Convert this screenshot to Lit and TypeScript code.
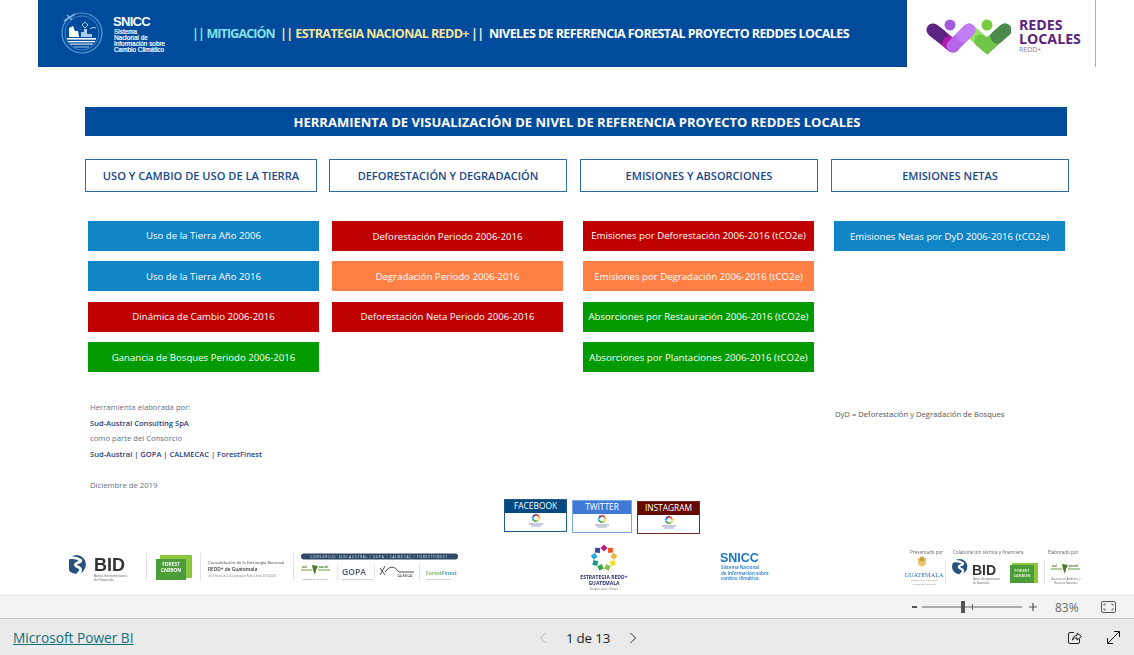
import { LitElement, html, css, svg } from "lit";
import { customElement } from "lit/decorators.js";

const petals = ["#b0207a", "#ef5a24", "#f5b335", "#f5dd2a", "#8cc63f", "#3fa548", "#1a9a8a", "#29a9e0", "#3a4a9f"];
function flower(cx: number, cy: number, r: number, s: number) {
  return petals.map((c, i) => {
    const a = (i * 40 * Math.PI) / 180;
    const x = cx + r * Math.sin(a);
    const y = cy - r * Math.cos(a);
    return svg`<rect x=${x - s / 2} y=${y - s / 2} width=${s} height=${s} fill=${c} transform="rotate(${i * 40 + 45} ${x} ${y})"></rect>`;
  });
}

const miniLogo = html`<svg class="mini" viewBox="0 0 30 17" width="30" height="17">
  ${flower(15, 5, 3.2, 2)}
  <rect x="8" y="10.5" width="14" height="1" fill="#8a92b8"></rect>
  <rect x="10" y="12.5" width="10" height="1" fill="#9aa2c4"></rect>
</svg>`;

const bidGlobe = (x: number, y: number, s: number) => svg`
  <g transform="translate(${x} ${y}) scale(${s})">
    <circle cx="9" cy="9" r="9" fill="#27527e"></circle>
    <path d="M1 3 C5 2 10 3 13 5 C14 7 9 7 8 9 C8 12 13 11 13 14 C13 16 11 17 10 18.5" fill="none" stroke="#fff" stroke-width="2.6"></path>
  </g>`;

const sudAustral = (x: number, y: number) => svg`
  <g transform="translate(${x} ${y})">
    <rect x="0" y="4.5" width="11" height="1" fill="#6b9a3a"></rect>
    <path d="M11 0 L17 1 L15 5 L14 10 L12 5 Z" fill="#4a7a28"></path>
    <rect x="17" y="4.5" width="12" height="1" fill="#6b9a3a"></rect>
    <text x="1" y="2.6" font-size="2.6" fill="#4a7a28" font-weight="700">sud</text>
    <text x="18" y="2.6" font-size="2.6" fill="#4a7a28" font-weight="700">austral</text>
  </g>`;

@customElement("app-root")
export class AppRoot extends LitElement {
  static styles = css`
    :host { display: block; width: 1134px; height: 655px; overflow: hidden; background: #fff; font-family: "Open Sans", "Noto Sans", sans-serif; }
    .report { height: 595px; display: flex; flex-direction: column; }
    .top { display: flex; height: 67px; margin-left: 38px; flex: none; }
    .banner { width: 869px; background: #004b9b; display: flex; align-items: flex-start; }
    .emblem { margin: 10px 0 0 22px; flex: none; }
    .snicc { margin: 15px 0 0 7px; width: 79px; color: #fff; flex: none; font-weight: 700; }
    .snicc b { display: block; font-family: "Liberation Sans", sans-serif; font-size: 13px; line-height: 14px; letter-spacing: -.7px; }
    .snicc span { display: block; font-family: "Liberation Sans", sans-serif; font-size: 6.4px; line-height: 6.1px; margin-left: 1px; font-weight: 400; -webkit-text-stroke: .2px #fff; }
    .crumbs { margin: 25px 0 0 0; font-size: 12.5px; line-height: 17px; font-weight: 700; white-space: nowrap; display: flex; }
    .cy { color: #85e2e6; width: 88px; letter-spacing: -.87px; }
    .ye { color: #f8e49a; width: 191px; letter-spacing: -.58px; }
    .wh { color: #fff; letter-spacing: -.58px; }
    .wh i { font-style: normal; color: #f3f0d8; }
    .brand { width: 188px; border-right: 1px solid #8fb3d9; display: flex; align-items: flex-start; }
    .wlogo { margin: 13px 0 0 18px; flex: none; }
    .brandtx { margin: 18px 0 0 8px; color: #5b2480; font-weight: 700; font-size: 14.2px; line-height: 14px; }
    .brandtx small { display: block; font-size: 7px; line-height: 8px; color: #8a7a96; font-weight: 400; }
    .title { margin: 40px 67px 0 85px; height: 29px; flex: none; background: #004b9b; color: #fff; font-weight: 700; font-size: 13px; display: flex; align-items: center; justify-content: center; padding-left: 2px; box-sizing: border-box; }
    .heads { margin: 23px 0 0 85px; display: grid; grid-template-columns: 244px 251px 251px 238px; flex: none; }
    .heads div { width: 238px; height: 33px; box-sizing: border-box; border: 1px solid #2e6ca8; color: #174a8c; font-weight: 600; font-size: 11px; display: flex; align-items: center; justify-content: center; white-space: nowrap; }
    .heads div:first-child { width: 232px; font-size: 11.1px; }
    .cols { margin: 29px 0 0 88px; height: 151px; display: flex; flex: none; }
    .col { width: 231px; flex: none; display: flex; flex-direction: column; gap: 10.4px; }
    .col:nth-child(2) { margin-left: 13px; }
    .col:nth-child(3), .col:nth-child(4) { margin-left: 20px; }
    .btn { height: 30px; color: #fff; font-size: 9.65px; display: flex; align-items: center; justify-content: center; white-space: nowrap; }
    .blue { background: #0f84c6; }
    .red { background: #c00000; }
    .orange { background: #ff7f44; }
    .green { background: #009b00; }
    .info { margin: 28px 0 0 90px; display: flex; flex: none; }
    .credits { width: 745px; font-size: 7.7px; line-height: 15.6px; color: #667085; height: 94px; }
    .credits b { display: block; font-weight: 600; font-size: 7.55px; color: #1f3f7a; }
    .credits p { margin: 0; }
    .credits .gap { margin-top: 15.6px; }
    .note { font-size: 7.65px; color: #555; padding-top: 7px; line-height: 15px; }
    .social { margin: 5px 0 0 504px; display: flex; gap: 5px; flex: none; height: 35px; align-items: flex-start; }
    .soc { width: 63px; height: 33px; box-sizing: border-box; border: 1.5px solid; display: flex; flex-direction: column; background: #fff; overflow: hidden; }
    .soc span { display: block; height: 13px; color: #fff; font-size: 8.4px; line-height: 11px; text-align: center; flex: none; }
    .mini { display: block; margin: 0 auto; }
    .fb { border-color: #1e5a8c; } .fb span { background: #004a80; }
    .tw { border-color: #7aa5e8; width: 60px; margin-top: 1px; } .tw span { background: #3f7ad6; }
    .ig { border-color: #7a2a25; margin-top: 2px; } .ig span { background: #640a00; }
    .logos { margin: 10px 0 0 69px; display: grid; grid-template-columns: 509px 142px 185px 1fr; flex: none; height: 51px; }
    .logos svg { display: block; filter: blur(.3px); }
    .zoombar { height: 22px; border-top: 1px solid #e2e2e2; background: #f3f3f3; display: flex; align-items: center; color: #666; }
    .zoombar svg { display: block; flex: none; }
    .slider { margin-left: 912px; }
    .pct { font-size: 12px; margin-left: 15px; width: 46px; color: #6a6a6a; }
    .foot { height: 36px; border-top: 1px solid #c8c8c8; background: #eaeaea; display: grid; grid-template-columns: 539px 98px 1fr; align-items: center; }
    .pbi { margin-left: 13px; color: #0f6f78; font-size: 13.7px; text-decoration: underline; white-space: nowrap; }
    .pager { display: flex; align-items: center; justify-content: space-between; color: #222; font-size: 13.4px; letter-spacing: -.2px; padding-top: 1px; }
    .acts { display: flex; justify-content: flex-end; gap: 25px; padding-right: 14px; }
  `;

  render() {
    const cols: [string, string][][] = [
      [["Uso de la Tierra Año 2006", "blue"], ["Uso de la Tierra Año 2016", "blue"], ["Dinámica de Cambio 2006-2016", "red"], ["Ganancia de Bosques Periodo 2006-2016", "green"]],
      [["Deforestación Periodo 2006-2016", "red"], ["Degradación Periodo 2006-2016", "orange"], ["Deforestación Neta Periodo 2006-2016", "red"]],
      [["Emisiones por Deforestación 2006-2016 (tCO2e)", "red"], ["Emisiones por Degradación 2006-2016 (tCO2e)", "orange"], ["Absorciones por Restauración 2006-2016 (tCO2e)", "green"], ["Absorciones por Plantaciones 2006-2016 (tCO2e)", "green"]],
      [["Emisiones Netas por DyD 2006-2016 (tCO2e)", "blue"]],
    ];
    return html`
      <div class="report">
        <div class="top">
          <div class="banner">
            <svg class="emblem" width="46" height="46" viewBox="0 0 46 46">
              <circle cx="22" cy="23" r="20" fill="none" stroke="#5c9bd8" stroke-width="1.2"></circle>
              <circle cx="22" cy="23" r="17" fill="none" stroke="#3f82c8" stroke-width="1"></circle>
              <g stroke="#7fb0e0" stroke-width="1.6" fill="none"><path d="M4 11 L15 4"></path><path d="M7 5 L12 10"></path></g>
              <path d="M9 27 L9 18 L13 16 L15 21 L18 21 L19 27 Z" fill="#fff"></path>
              <path d="M21 27 V22 H24 V19 H27 V24 H32 V27 Z" fill="#a9cdf0"></path>
              <path d="M25 12 l3 3 l-3 3 l-3 -3 Z" fill="none" stroke="#a9cdf0"></path>
              <path d="M30 19 q3 -3 6 -1" fill="none" stroke="#a9cdf0"></path>
              <rect x="7" y="28" width="29" height="1.6" fill="#fff"></rect>
              <rect x="8" y="31" width="27" height="1.3" fill="#fff"></rect>
              <rect x="10" y="33.5" width="23" height="1.2" fill="#d5e6f7"></rect>
              <rect x="14" y="36.5" width="15" height="1" fill="#9cc2ea"></rect>
            </svg>
            <div class="snicc"><b>SNICC</b><span>Sistema</span><span>Nacional de</span><span>Información sobre</span><span>Cambio Climático</span></div>
            <div class="crumbs">
              <span class="cy">|| MITIGACIÓN</span>
              <span class="ye">|| ESTRATEGIA NACIONAL REDD+</span>
              <span class="wh"><i>||</i>&nbsp; NIVELES DE REFERENCIA FORESTAL PROYECTO REDDES LOCALES</span>
            </div>
          </div>
          <div class="brand">
            <svg class="wlogo" width="86" height="42" viewBox="0 0 86 42" fill="none" stroke-width="13">
              <circle cx="25" cy="12" r="5.5" fill="#a45be0"></circle>
              <circle cx="62" cy="12" r="5.5" fill="#7ac943"></circle>
              <path d="M8 17 L28 33" stroke="#8f108f"></path>
              <path d="M8 17 L16 23" stroke="#5b2480" stroke-linecap="round"></path>
              <path d="M24 30 L28 33" stroke="#b01cb0" stroke-linecap="round"></path>
              <path d="M28 33 L44 17" stroke="#b566ea" stroke-linecap="round"></path>
              <path d="M44 17 L62 33" stroke="#95e063"></path>
              <path d="M38 23 L44 17" stroke="#c27cf5" stroke-linecap="round"></path>
              <path d="M62 33 L80 17" stroke="#5a9e5a" stroke-linecap="round"></path>
              <path d="M56 28 L62 33 L66 29" stroke="#6fc545" stroke-linecap="round"></path>
              <path d="M72 24 L80 17" stroke="#4a8a4a" stroke-linecap="round"></path>
            </svg>
            <div class="brandtx">REDES<br />LOCALES<small>REDD+</small></div>
          </div>
        </div>

        <div class="title">HERRAMIENTA DE VISUALIZACIÓN DE NIVEL DE REFERENCIA PROYECTO REDDES LOCALES</div>

        <div class="heads">
          <div>USO Y CAMBIO DE USO DE LA TIERRA</div>
          <div>DEFORESTACIÓN Y DEGRADACIÓN</div>
          <div>EMISIONES Y ABSORCIONES</div>
          <div>EMISIONES NETAS</div>
        </div>

        <div class="cols">
          ${cols.map((c) => html`<div class="col">${c.map(([t, k]) => html`<div class="btn ${k}">${t}</div>`)}</div>`)}
        </div>

        <div class="info">
          <div class="credits">
            <p>Herramienta elaborada por:</p>
            <b>Sud-Austral Consulting SpA</b>
            <p>como parte del Consorcio</p>
            <b>Sud-Austral | GOPA | CALMECAC | ForestFinest</b>
            <p class="gap">Diciembre de 2019</p>
          </div>
          <div class="note">DyD = Deforestación y Degradación de Bosques</div>
        </div>

        <div class="social">
          <div class="soc fb"><span>FACEBOOK</span>${miniLogo}</div>
          <div class="soc tw"><span>TWITTER</span>${miniLogo}</div>
          <div class="soc ig"><span>INSTAGRAM</span>${miniLogo}</div>
        </div>

        <div class="logos">
          <svg width="389" height="51" viewBox="0 0 389 51" font-family="Open Sans, sans-serif">
            ${bidGlobe(-2, 11, 1.05)}
            <text x="25" y="27" font-size="18" font-weight="700" fill="#333" font-family="Liberation Sans, sans-serif">BID</text>
            <text x="25" y="32.5" font-size="3.2" fill="#555">Banco Interamericano</text>
            <text x="25" y="37" font-size="3.2" fill="#555">de Desarrollo</text>
            <rect x="77" y="9" width="1" height="28" fill="#e4e4e4"></rect>
            <rect x="91" y="11" width="32" height="23" fill="#8cc63f"></rect>
            <rect x="87" y="15" width="30" height="21" fill="#4d9c3a"></rect>
            <text x="102" y="22" font-size="4.8" font-weight="700" fill="#fff" text-anchor="middle">FOREST</text>
            <text x="102" y="28" font-size="4.8" font-weight="700" fill="#fff" text-anchor="middle">CARBON</text>
            <rect x="131" y="9" width="1" height="28" fill="#e4e4e4"></rect>
            <text x="139" y="20" font-size="4.2" fill="#444">Consolidación de la Estrategia Nacional</text>
            <text x="139" y="27" font-size="4.8" font-weight="600" fill="#333">REDD+ de Guatemala</text>
            <text x="139" y="33" font-size="2.7" fill="#777">en el marco de la Cooperación Reino Unido 2019-2020</text>
            <rect x="224" y="9" width="1" height="28" fill="#e4e4e4"></rect>
            <rect x="232" y="9.5" width="157" height="6" rx="3" fill="#2e4a68"></rect>
            <text x="310" y="13.7" font-size="3.2" fill="#dfe7ef" text-anchor="middle" letter-spacing=".75">CONSORCIO: SUD-AUSTRAL / GOPA / CALMECAC / FORESTFINEST</text>
            ${sudAustral(232, 21)}
            <text x="233" y="35.5" font-size="2.4" fill="#777">Asesores en Ambiente y</text>
            <rect x="268" y="20" width="1" height="16" fill="#e4e4e4"></rect>
            <text x="273" y="31" font-size="8.6" font-weight="600" fill="#4a5560">GOPA</text>
            <text x="273" y="35.5" font-size="2.4" fill="#888">Intercooperation Consulting</text>
            <rect x="305" y="20" width="1" height="16" fill="#e4e4e4"></rect>
            <path d="M311 24 L316 31 M311 31 L316 22 M316 28 Q323 18 330 28 L345 28" stroke="#222" fill="none" stroke-width=".8"></path>
            <text x="328" y="33" font-size="3.2" fill="#222">CALMECAC</text>
            <rect x="350" y="20" width="1" height="16" fill="#e4e4e4"></rect>
            <text x="357" y="30.5" font-size="5.2" font-weight="600" fill="#6aa84f">Forest<tspan fill="#2f8fb5">Finest</tspan></text>
            <text x="357" y="35.5" font-size="2.1" fill="#888">Forest Carbon Consultant</text>
          </svg>

          <svg width="52" height="51" viewBox="0 0 52 51" font-family="Open Sans, sans-serif">
            ${flower(26, 14, 10, 5)}
            <text x="26" y="34.5" font-size="5" font-weight="700" fill="#23306e" text-anchor="middle">ESTRATEGIA REDD+</text>
            <text x="26" y="40.5" font-size="5" font-weight="700" fill="#23306e" text-anchor="middle">GUATEMALA</text>
            <text x="26" y="45.5" font-size="2.6" fill="#777" text-anchor="middle">Bosques para el Futuro</text>
          </svg>

          <svg width="52" height="51" viewBox="0 0 52 51" font-family="Open Sans, sans-serif">
            <text x="0" y="18" font-size="12.5" font-weight="700" fill="#1a75c9" font-family="Liberation Sans, sans-serif">SNICC</text>
            <text x="1" y="25" font-size="4.6" font-weight="600" fill="#1a75c9">Sistema Nacional</text>
            <text x="1" y="30.5" font-size="4.6" font-weight="600" fill="#1a75c9">de Información sobre</text>
            <text x="1" y="36" font-size="4.6" font-weight="600" fill="#1a75c9">cambio climático.</text>
          </svg>

          <svg width="185" height="51" viewBox="0 0 185 51" font-family="Open Sans, sans-serif">
            <text x="5" y="10" font-size="4.6" fill="#666">Presentado por</text>
            <text x="48" y="10" font-size="4.6" fill="#666">Colaboración técnica y financiera</text>
            <text x="143" y="10" font-size="4.6" fill="#666">Elaborado por</text>
            <path d="M13 14 h8 v6 q-4 5 -8 0 Z" fill="#e8c56a"></path>
            <circle cx="17" cy="15" r="2.5" fill="#c9a23c"></circle>
            <text x="19" y="33" font-size="6.3" fill="#2e6fb5" text-anchor="middle" font-family="Liberation Serif, serif">GUATEMALA</text>
            <text x="19" y="37" font-size="2.4" fill="#888" text-anchor="middle">Ministerio de Ambiente</text>
            <text x="19" y="40.5" font-size="2.4" fill="#888" text-anchor="middle">y Recursos Naturales</text>
            <rect x="40" y="16" width="1" height="24" fill="#e4e4e4"></rect>
            ${bidGlobe(47, 15, .85)}
            <text x="67" y="31" font-size="14" font-weight="700" fill="#333" font-family="Liberation Sans, sans-serif">BID</text>
            <text x="68" y="36" font-size="2.6" fill="#555">Banco Interamericano</text>
            <text x="68" y="39.5" font-size="2.6" fill="#555">de Desarrollo</text>
            <rect x="107" y="19" width="26" height="20" fill="#8cc63f"></rect>
            <rect x="105" y="21" width="24" height="18" fill="#4d9c3a"></rect>
            <text x="117" y="28" font-size="4" font-weight="700" fill="#dff0c8" text-anchor="middle">FOREST</text>
            <text x="117" y="33" font-size="4" font-weight="700" fill="#dff0c8" text-anchor="middle">CARBON</text>
            <rect x="139" y="16" width="1" height="24" fill="#e4e4e4"></rect>
            ${sudAustral(146, 20)}
            <text x="161" y="36" font-size="2.6" fill="#666" text-anchor="middle">Asesores en Ambiente y</text>
            <text x="161" y="39.5" font-size="2.6" fill="#666" text-anchor="middle">Recursos Naturales</text>
          </svg>
        </div>
      </div>

      <div class="zoombar">
        <svg class="slider" width="128" height="22" viewBox="0 0 128 22">
          <rect x="0" y="10" width="5" height="2" fill="#555"></rect>
          <rect x="10" y="10.5" width="100" height="1" fill="#666"></rect>
          <rect x="49" y="5" width="4" height="12" fill="#555"></rect>
          <rect x="60" y="8" width="1" height="6" fill="#666"></rect>
          <path d="M117 11 h8 M121 7 v8" stroke="#555" stroke-width="1.2"></path>
        </svg>
        <span class="pct">83%</span>
        <svg width="15" height="12" viewBox="0 0 15 12" fill="none" stroke="#555">
          <rect x=".5" y=".5" width="14" height="11" rx="1.5"></rect>
          <path d="M3 5 V3 H5 M12 5 V3 H10 M3 7 V9 H5 M12 7 V9 H10" stroke-width=".8"></path>
        </svg>
      </div>

      <div class="foot">
        <span class="pbi">Microsoft Power BI</span>
        <div class="pager">
          <svg width="8" height="12" viewBox="0 0 8 12" fill="none" stroke="#b5b5b5"><path d="M6.5 1 L1.5 6 L6.5 11"></path></svg>
          <span>1 de 13</span>
          <svg width="8" height="12" viewBox="0 0 8 12" fill="none" stroke="#333"><path d="M1.5 1 L6.5 6 L1.5 11"></path></svg>
        </div>
        <div class="acts">
          <svg width="14" height="13" viewBox="0 0 14 13" fill="none" stroke="#222">
            <path d="M6 1.5 H2 Q.5 1.5 .5 3 V11 Q.5 12.5 2 12.5 H10 Q11.5 12.5 11.5 11 V8"></path>
            <path d="M4.5 9 Q5 4.5 9 4.5 V2 L13.5 5.5 L9 9 V6.8 Q6 6.5 4.5 9 Z"></path>
          </svg>
          <svg width="13" height="13" viewBox="0 0 13 13" fill="none" stroke="#111">
            <path d="M1 12 L12 1 M7 .5 H12.5 V6 M.5 7 V12.5 H6"></path>
          </svg>
        </div>
      </div>
    `;
  }
}
